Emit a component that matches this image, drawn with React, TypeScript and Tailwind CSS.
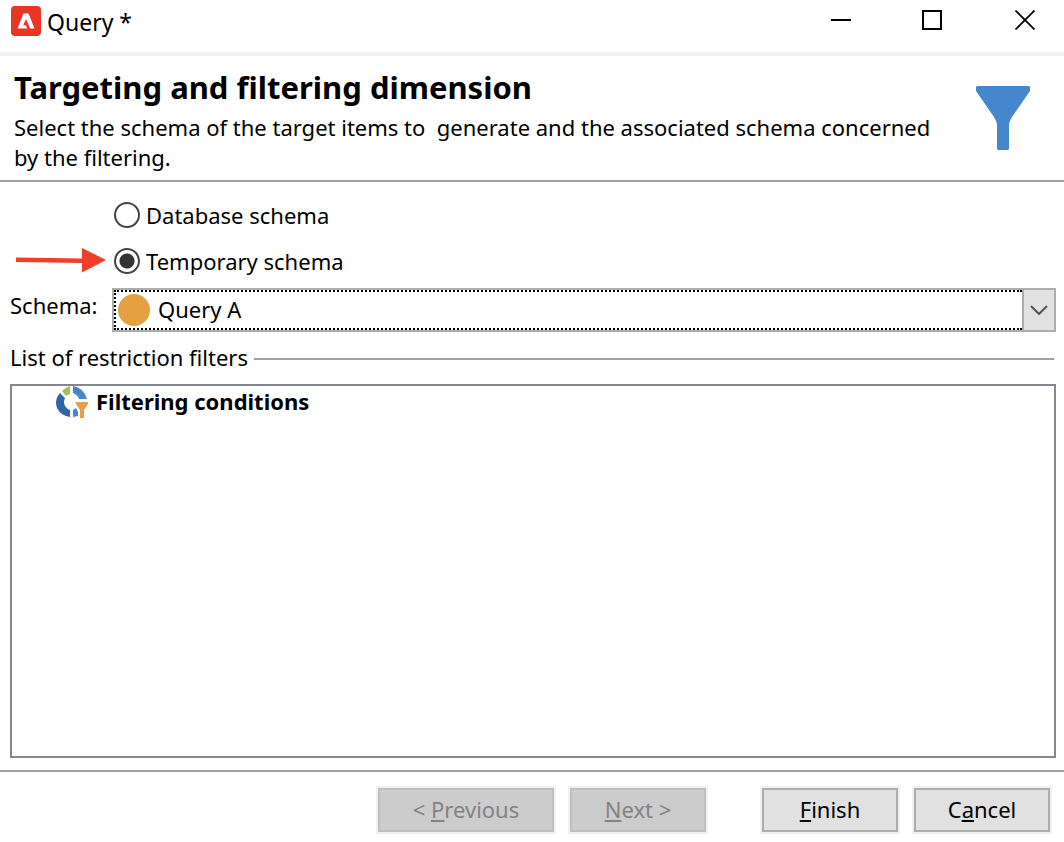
import { useState } from "react";

type SchemaKind = "database" | "temporary";

const SCHEMA_KINDS: { value: SchemaKind; label: string }[] = [
  { value: "database", label: "Database schema" },
  { value: "temporary", label: "Temporary schema" },
];

const WIZARD_BUTTON =
  "h-12 border-2 border-[#f0f0f0] text-black disabled:text-[#838383] group";
const WIZARD_BUTTON_FACE =
  "flex h-full items-center justify-center border-2 border-[#adadad] bg-[#e1e1e1] pb-0.5 whitespace-pre group-disabled:border-[#bfbfbf] group-disabled:bg-[#cccccc]";

function AppLogo() {
  return (
    <svg viewBox="0 0 30 30" className="h-[30px] w-[30px]" aria-hidden="true">
      <rect width="30" height="30" rx="4" fill="#e93524" />
      <path d="M12.5 7.500h5l6 15h-4.300L15 13l-2.800 6.200h2.600l1.500 3.300H6.500z" fill="#fff" />
    </svg>
  );
}

function FunnelIcon() {
  return (
    <svg viewBox="0 0 54 64" className="mb-1 h-16 w-[54px] shrink-0" aria-hidden="true">
      <path d="M1 0h52l1 1v4L36 31q-3 5-3 8v24l-1 1H22l-1-1V39q0-3-3-8L0 5V1z" fill="#4687cc" />
    </svg>
  );
}

function FilterNodeIcon() {
  return (
    <svg viewBox="0 0 32 32" className="h-8 w-8 shrink-0" aria-hidden="true">
      <path d="M4 7l5 5q-2 4 0 8 2 3 5 4v7Q5 30 1 22-2 14 4 7z" fill="#2f66a9" />
      <path d="M6 5q4-4 8-5v8q-3 1-4 2z" fill="#9bc255" />
      <path d="M17 0q11 2 14 13h-8q-1-4-6-6z" fill="#4687cc" />
      <path d="M17 24l3-2 2 4v4l-5 1z" fill="#4687cc" />
      <path d="M20 16h12v2l-4 6v8h-4v-8l-4-6z" fill="#e4a142" />
    </svg>
  );
}

function PointerArrow() {
  return (
    <svg viewBox="0 0 90 26" className="h-[26px] w-[90px]" aria-hidden="true">
      <path d="M0 9.500l66 1V0l24 12-24 12.500V15L0 14z" fill="#ee4026" />
    </svg>
  );
}

function TitleBar() {
  return (
    <div className="flex h-14 items-start justify-between border-b-4 border-[#f0f0f0]">
      <div className="flex items-start gap-1.5 pt-1 pl-[11px]">
        <div className="pt-0.5">
          <AppLogo />
        </div>
        <span className="text-[23px] leading-9">Query *</span>
      </div>
      <div className="flex pt-1.5">
        <button type="button" aria-label="Minimize" className="flex h-7 w-[92px] items-center justify-center">
          <svg viewBox="0 0 20 20" className="h-5 w-5" stroke="#000" strokeWidth="2">
            <path d="M0 10h20" />
          </svg>
        </button>
        <button type="button" aria-label="Maximize" className="flex h-7 w-[90px] items-center justify-center">
          <svg viewBox="0 0 20 20" className="h-5 w-5" stroke="#000" strokeWidth="2" fill="none">
            <rect x="1" y="1" width="18" height="18" />
          </svg>
        </button>
        <button type="button" aria-label="Close" className="flex h-7 w-[87px] items-center justify-end pr-[29px]">
          <svg viewBox="0 0 20 20" className="h-5 w-5" stroke="#000" strokeWidth="1.8">
            <path d="M.5.5l19 19M19.5.5l-19 19" />
          </svg>
        </button>
      </div>
    </div>
  );
}

export default function App() {
  const [kind, setKind] = useState<SchemaKind>("temporary");

  return (
    <div className="flex min-h-screen flex-col bg-white font-['Noto_Sans','Open_Sans',sans-serif] text-[22px] leading-[30px] text-black">
      <TitleBar />

      <header className="flex items-center justify-between border-b-2 border-[#a0a0a0] pt-3 pr-[34px] pb-2 pl-3.5">
        <div>
          <h1 className="text-[31px] leading-[38px] font-bold">Targeting and filtering dimension</h1>
          <p className="max-w-[940px] pt-1.5 whitespace-pre-wrap">
            {"Select the schema of the target items to  generate and the associated schema concerned by the filtering."}
          </p>
        </div>
        <FunnelIcon />
      </header>

      <main className="flex flex-1 flex-col px-2.5 pt-[18px] pb-3">
        <fieldset className="flex flex-col gap-4">
          {SCHEMA_KINDS.map((item) => (
            <div key={item.value} className="flex items-center">
              <div className="w-[104px] shrink-0 pl-1.5">{item.value === "temporary" && <PointerArrow />}</div>
              <label className="flex items-center gap-1.5">
                <input
                  type="radio"
                  name="schema-kind"
                  checked={kind === item.value}
                  onChange={() => setKind(item.value)}
                  className="h-[26px] w-[26px] appearance-none rounded-full border-2 border-[#444] bg-white checked:bg-[radial-gradient(circle,#333_7px,#fff_8px)]"
                />
                {item.label}
              </label>
            </div>
          ))}
        </fieldset>

        <div className="-mr-0.5 flex items-start pt-3">
          <label htmlFor="schema" className="w-[102px] shrink-0 pt-0.5">
            Schema:
          </label>
          <div className="flex h-11 flex-1 border-2 border-[#adadad]">
            <div className="flex flex-1 items-center border-2 border-r-0 border-dotted border-black pl-0.5">
              <span className="h-8 w-8 shrink-0 rounded-full bg-[#e4a142]" />
              <select id="schema" defaultValue="a" className="h-full w-full appearance-none pb-0.5 pl-2 outline-none">
                <option value="a">Query A</option>
              </select>
            </div>
            <span className="flex w-8 items-center justify-center border-l-2 border-[#adadad] bg-[#e1e1e1]">
              <svg viewBox="0 0 18 10" className="h-2.5 w-[18px]" fill="none" stroke="#555" strokeWidth="2" aria-hidden="true">
                <path d="M1 1l8 8 8-8" />
              </svg>
            </span>
          </div>
        </div>

        <div className="flex items-center gap-1.5 pt-2.5 pb-3">
          <h2>List of restriction filters</h2>
          <div className="mt-1 h-0.5 flex-1 bg-[#a0a0a0]" />
        </div>

        <div className="-mr-0.5 flex-1 border-2 border-[#828790]">
          <div className="flex items-start gap-2 pl-11 font-bold">
            <FilterNodeIcon />
            Filtering conditions
          </div>
        </div>
      </main>

      <footer className="flex justify-end border-t-2 border-[#a0a0a0] pt-3.5 pr-3 pb-2">
        <button type="button" disabled className={`${WIZARD_BUTTON} w-[180px]`}>
          <span className={WIZARD_BUTTON_FACE}>
            {"< "}
            <u className="decoration-2 underline-offset-2">P</u>revious
          </span>
        </button>
        <button type="button" disabled className={`${WIZARD_BUTTON} ml-3 w-[140px]`}>
          <span className={WIZARD_BUTTON_FACE}>
            <u className="decoration-2 underline-offset-2">N</u>
            {"ext >"}
          </span>
        </button>
        <button type="button" className={`${WIZARD_BUTTON} ml-[52px] w-[140px]`}>
          <span className={WIZARD_BUTTON_FACE}>
            <u className="decoration-2 underline-offset-2">F</u>inish
          </span>
        </button>
        <button type="button" className={`${WIZARD_BUTTON} ml-3 w-[140px]`}>
          <span className={WIZARD_BUTTON_FACE}>
            C<u className="decoration-2 underline-offset-2">a</u>ncel
          </span>
        </button>
      </footer>
    </div>
  );
}
